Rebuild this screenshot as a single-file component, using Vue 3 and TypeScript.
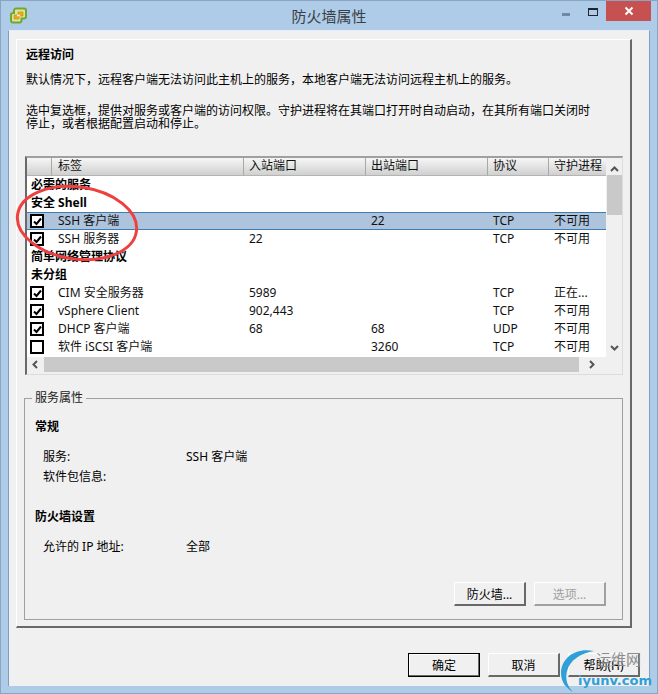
<template>
  <div class="window">
    <div class="titlebar">
      <div class="title-left">
        <svg class="app-icon" width="17" height="17" viewBox="0 0 17 17">
          <path d="M6 1.500h8a2 2 0 0 1 2 2v6a2 2 0 0 1-2 2h-2.500v2a2 2 0 0 1-2 2H3a2 2 0 0 1-2-2V8a2 2 0 0 1 2-2h1V3.500a2 2 0 0 1 2-2z" fill="#d3e6a8" stroke="#74a62a" stroke-width="2" />
          <path d="M8 5h5v4H9v3H4V8h4z" fill="#f0a818" stroke="#c98a10" stroke-width="0.600" />
          <path d="M7 8.500h3" stroke="#fff3c0" stroke-width="1.500" />
        </svg>
      </div>
      <div class="title-text">防火墙属性</div>
      <div class="controls">
        <span class="ctl-min"></span>
        <span class="ctl-max"></span>
        <span class="ctl-close">
          <svg width="10" height="10" viewBox="0 0 10 10">
            <path d="M1.500 1.500l7 7M8.500 1.500l-7 7" stroke="#fff" stroke-width="2" />
          </svg>
        </span>
      </div>
    </div>

    <div class="client">
      <div class="panel">
        <h1 class="heading">远程访问</h1>
        <p class="desc first">默认情况下，远程客户端无法访问此主机上的服务，本地客户端无法访问远程主机上的服务。</p>
        <p class="desc second">
          选中复选框，提供对服务或客户端的访问权限。守护进程将在其端口打开时自动启动，在其所有端口关闭时<br />停止，或者根据配置启动和停止。
        </p>

        <div class="table-box">
          <div class="table-main">
            <div class="table-view">
              <div class="row header">
                <div v-for="col in columns" :key="col" class="cell head-cell">{{ col }}</div>
              </div>
              <div
                v-for="row in rows"
                :key="row.label"
                class="row"
                :class="{ group: row.group, selected: row.selected }"
              >
                <template v-if="row.group">
                  <div class="group-label">{{ row.label }}</div>
                </template>
                <template v-else>
                  <div class="cell check-cell">
                    <span class="check">
                      <svg v-if="row.checked" width="9" height="9" viewBox="0 0 9 9">
                        <path d="M1 4.500l2.500 2.500L8 1.500" fill="none" stroke="#000" stroke-width="2" />
                      </svg>
                    </span>
                  </div>
                  <div class="cell name-cell">{{ row.label }}</div>
                  <div class="cell">{{ row.inbound }}</div>
                  <div class="cell">{{ row.outbound }}</div>
                  <div class="cell">{{ row.protocol }}</div>
                  <div class="cell">{{ row.daemon }}</div>
                </template>
              </div>
            </div>
            <div class="vscroll">
              <svg width="9" height="6" viewBox="0 0 9 6"><path d="M1 5l3.500-3.500L8 5" fill="none" stroke="#555" stroke-width="2" /></svg>
              <div class="vthumb"></div>
              <svg class="down" width="9" height="6" viewBox="0 0 9 6"><path d="M1 1l3.500 3.500L8 1" fill="none" stroke="#555" stroke-width="2" /></svg>
            </div>
          </div>
          <div class="hscroll">
            <svg width="6" height="9" viewBox="0 0 6 9"><path d="M5 1L1.500 4.500 5 8" fill="none" stroke="#555" stroke-width="2" /></svg>
            <div class="hthumb"></div>
            <svg width="6" height="9" viewBox="0 0 6 9"><path d="M1 1l3.500 3.500L1 8" fill="none" stroke="#555" stroke-width="2" /></svg>
          </div>
        </div>

        <fieldset class="props">
          <legend>服务属性</legend>
          <h2 class="sub">常规</h2>
          <div class="kv"><span>服务:</span><span>SSH 客户端</span></div>
          <div class="kv"><span>软件包信息:</span><span></span></div>
          <h2 class="sub second-sub">防火墙设置</h2>
          <div class="kv"><span>允许的 IP 地址:</span><span>全部</span></div>
          <div class="prop-actions">
            <button class="btn">防火墙...</button>
            <button class="btn" disabled>选项...</button>
          </div>
        </fieldset>
      </div>

      <div class="footer">
        <button class="btn default">确定</button>
        <button class="btn">取消</button>
        <button class="btn">帮助(H)</button>
      </div>
    </div>

    <svg class="circle-mark" width="130" height="84" viewBox="0 0 130 84">
      <ellipse cx="65" cy="42" rx="60" ry="36" transform="rotate(8 65 42)" fill="none" stroke="#ee4040" stroke-width="3" />
    </svg>

    <div class="watermark">
      <svg class="wm-arc" width="50" height="50" viewBox="0 0 50 50">
        <path d="M38 5C20 1 5 12 5 27c0 9 5 15 12 19C11 40 9 33 11 25 14 14 25 7 38 5z" fill="#2f9fd8" />
      </svg>
      <span class="wm-cn">运维网</span>
      <span class="wm-en">iyunv.com</span>
    </div>
  </div>
</template>

<script setup lang="ts">
interface Row {
  label: string
  group?: boolean
  checked?: boolean
  selected?: boolean
  inbound?: string
  outbound?: string
  protocol?: string
  daemon?: string
}

const columns = ['', '标签', '入站端口', '出站端口', '协议', '守护进程']

const rows: Row[] = [
  { label: '必需的服务', group: true },
  { label: '安全 Shell', group: true },
  { label: 'SSH 客户端', checked: true, selected: true, outbound: '22', protocol: 'TCP', daemon: '不可用' },
  { label: 'SSH 服务器', checked: true, inbound: '22', protocol: 'TCP', daemon: '不可用' },
  { label: '简单网络管理协议', group: true },
  { label: '未分组', group: true },
  { label: 'CIM 安全服务器', checked: true, inbound: '5989', protocol: 'TCP', daemon: '正在...' },
  { label: 'vSphere Client', checked: true, inbound: '902,443', protocol: 'TCP', daemon: '不可用' },
  { label: 'DHCP 客户端', checked: true, inbound: '68', outbound: '68', protocol: 'UDP', daemon: '不可用' },
  { label: '软件 iSCSI 客户端', checked: false, outbound: '3260', protocol: 'TCP', daemon: '不可用' }
]
</script>

<style scoped>
.window {
  position: relative;
  width: 658px;
  height: 694px;
  box-sizing: border-box;
  overflow: hidden;
  display: flex;
  flex-direction: column;
  background: #aecbe8;
  border: 1px solid #8aa5c4;
  font-family: "Noto Sans", "Noto Sans CJK SC", sans-serif;
  font-size: 12px;
  color: #000;
}

.titlebar {
  height: 29px;
  display: grid;
  grid-template-columns: 1fr auto 1fr;
  flex: none;
}

.title-left {
  padding: 6px 0 0 9px;
}

.app-icon {
  display: block;
}

.title-text {
  font-size: 15px;
  line-height: 20px;
  padding-top: 5px;
  color: #3a3f46;
}

.controls {
  display: flex;
  justify-content: flex-end;
  align-items: flex-start;
  padding-right: 6px;
}

.ctl-min {
  width: 8px;
  height: 3px;
  margin-top: 12px;
  background: #6f88a5;
}

.ctl-max {
  width: 8px;
  height: 5px;
  margin: 7px 0 0 18px;
  border: 1px solid #1d2733;
  border-top-width: 2px;
}

.ctl-close {
  width: 45px;
  height: 20px;
  margin-left: 8px;
  background: #c75050;
  display: flex;
  align-items: center;
  justify-content: center;
}

.client {
  flex: 1;
  margin: 0 7px 7px;
  background: #f0f0f0;
  border-top: 1px solid #e8eef5;
  border-left: 1px solid #7f9dbe;
  border-right: 1px solid #7f9dbe;
  display: flex;
  flex-direction: column;
  padding: 8px 17px 0 7px;
  box-sizing: border-box;
}

.panel {
  height: 589px;
  box-sizing: border-box;
  border-top: 1px solid #fff;
  border-left: 1px solid #fff;
  border-right: 2px solid #696969;
  border-bottom: 2px solid #696969;
  padding: 7px 7px 0 9px;
  display: flex;
  flex-direction: column;
}

.heading {
  margin: 0;
  font-size: 12px;
  line-height: 16px;
  font-weight: 700;
}

.desc {
  margin: 0;
  line-height: 13px;
}

.first {
  margin-top: 10px;
}

.second {
  margin-top: 18px;
}

.table-box {
  margin: 26px 0 0 -1px;
  height: 219px;
  box-sizing: border-box;
  background: #f0f0f0;
  border-top: 2px solid #a0a0a0;
  border-left: 2px solid #696969;
  border-right: 1px solid #dcdcdc;
  border-bottom: 1px solid #dcdcdc;
  display: flex;
  flex-direction: column;
  flex: none;
}

.table-main {
  display: flex;
  height: 199px;
}

.table-view {
  width: 579px;
  background: #fff;
  overflow: hidden;
}

.row {
  display: grid;
  grid-template-columns: 25px 192px 122px 122px 61px 57px;
  height: 18px;
  line-height: 18px;
  box-sizing: border-box;
}

.row.header {
  height: 18px;
  background: linear-gradient(#f6f6f6, #d0d0d0);
  border-bottom: 1px solid #b4b4b4;
}

.head-cell {
  padding: 0 0 0 5px;
  line-height: 16px;
  border-right: 1px solid #a8a8a8;
  overflow: hidden;
}

.head-cell:nth-child(2) {
  padding-left: 6px;
}

.head-cell:last-child {
  border-right: 0;
}

.cell {
  padding-left: 5px;
  white-space: nowrap;
  color: #111;
}

.name-cell {
  padding-left: 6px;
}

.group {
  display: block;
}

.group-label {
  padding-left: 4px;
  font-weight: 700;
  white-space: nowrap;
}

.selected {
  line-height: 16px;
  background: #aec3dc;
  border-top: 1px solid #3f7cb0;
  border-bottom: 1px solid #3f7cb0;
}

.check-cell {
  padding-left: 3px;
  display: flex;
  align-items: center;
}

.check {
  width: 12px;
  height: 12px;
  border: 1px solid #000;
  box-shadow: inset 0 0 0 1px #000;
  background: #fff;
  display: flex;
  align-items: center;
  justify-content: center;
}

.vscroll {
  width: 16px;
  display: flex;
  flex-direction: column;
  align-items: center;
  padding-top: 8px;
  box-sizing: border-box;
}

.vthumb {
  width: 15px;
  height: 40px;
  margin-top: 3px;
  background: #c9c9c9;
}

.vscroll .down {
  margin-top: auto;
  margin-bottom: 6px;
}

.hscroll {
  height: 15px;
  display: flex;
  align-items: center;
  padding-left: 5px;
  background: #f0f0f0;
}

.hthumb {
  width: 535px;
  height: 15px;
  margin: 0 10px 0 6px;
  background: #c9c9c9;
}

.props {
  margin: 16px 0 0 -2px;
  padding: 0 15px 0 10px;
  height: 229px;
  box-sizing: border-box;
  border: 1px solid #a0a0a0;
  min-width: 0;
  flex: none;
}

.props legend {
  padding: 0 3px;
  margin-left: -3px;
  line-height: 14px;
  color: #222;
}

.sub {
  margin: 14px 0 0;
  font-size: 12px;
  line-height: 16px;
  font-weight: 700;
}

.second-sub {
  margin-top: 24px;
}

.kv {
  display: grid;
  grid-template-columns: 143px 1fr;
  padding-left: 8px;
  margin-top: 4px;
  line-height: 16px;
}

.sub + .kv {
  margin-top: 14px;
}

.prop-actions {
  margin-top: 27px;
  margin-right: 1px;
  display: flex;
  justify-content: flex-end;
  gap: 8px;
}

.btn {
  width: 72px;
  height: 24px;
  padding: 0;
  box-sizing: border-box;
  font: inherit;
  color: #000;
  background: #f0f0f0;
  border: 1px solid;
  border-color: #fff #696969 #696969 #fff;
  border-width: 1px 2px 2px 1px;
}

.btn:disabled {
  color: #a0a0a0;
  border-color: #fff #a0a0a0 #a0a0a0 #fff;
}

.btn.default {
  border: 1px solid #000;
  box-shadow: inset -1px -1px 0 #696969, inset 1px 1px 0 #fff;
}

.footer {
  display: flex;
  justify-content: flex-end;
  gap: 8px;
  margin-top: 25px;
  margin-right: -8px;
}

.circle-mark {
  position: absolute;
  left: 11px;
  top: 180px;
  pointer-events: none;
}

.watermark {
  position: absolute;
  left: 555px;
  top: 645px;
  width: 103px;
  height: 49px;
  pointer-events: none;
}

.wm-arc {
  position: absolute;
  left: 0;
  top: 0;
}

.wm-cn {
  position: absolute;
  left: 40px;
  top: 4px;
  font-size: 15px;
  line-height: 18px;
  color: #8d8d8d;
}

.wm-en {
  position: absolute;
  left: 22px;
  top: 26px;
  font-family: "DejaVu Sans", sans-serif;
  font-size: 13px;
  line-height: 18px;
  font-weight: 700;
  color: #2f9fd8;
  white-space: nowrap;
}
</style>

<style>
html,
body {
  margin: 0;
  background: #aecbe8;
}
</style>
